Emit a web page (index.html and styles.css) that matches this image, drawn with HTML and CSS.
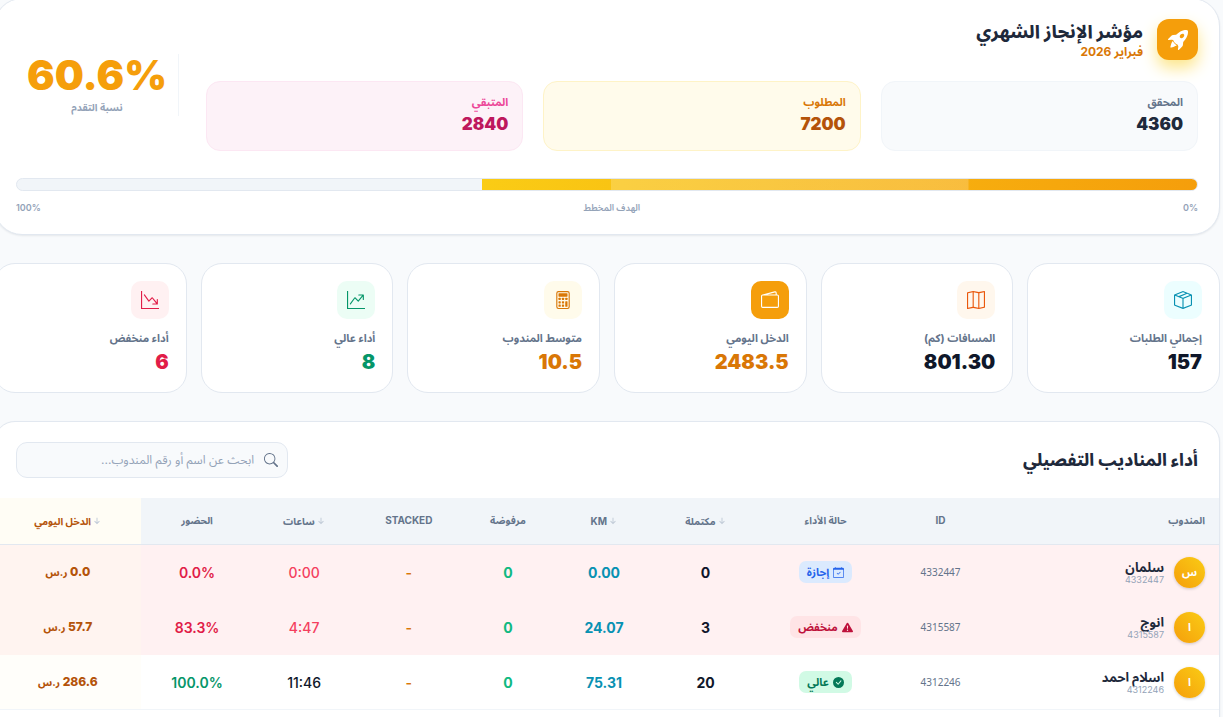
FILE: index.html
```html
<!DOCTYPE html>
<html lang="ar" dir="rtl">
<head>
    <meta charset="UTF-8">
    <meta name="viewport" content="width=device-width, initial-scale=1.0">
    <title>مؤشر الإنجاز الشهري</title>
    <link rel="stylesheet" href="styles.css">
</head>
<body>
    <svg class="sprite" aria-hidden="true">
        <symbol id="i-rocket" viewBox="0 0 16 16">
            <path d="M12.17 9.53c2.307-2.592 3.278-4.684 3.641-6.218.21-.887.214-1.58.16-2.065a3.6 3.6 0 0 0-.108-.563 2 2 0 0 0-.078-.23V.453c-.073-.164-.168-.234-.352-.295a2 2 0 0 0-.16-.045 4 4 0 0 0-.57-.093c-.49-.044-1.19-.03-2.08.188-1.536.374-3.618 1.343-6.161 3.604l-2.4.238h-.006a2.55 2.55 0 0 0-1.524.734L.15 7.17a.512.512 0 0 0 .433.868l1.896-.271c.28-.04.592.013.955.132.232.076.437.16.655.248l.203.083c.196.816.66 1.58 1.275 2.195.613.614 1.376 1.08 2.191 1.277l.082.202c.089.218.173.424.249.657.118.363.172.676.132.956l-.271 1.9a.512.512 0 0 0 .867.433l2.382-2.386c.41-.41.668-.949.732-1.526zm.11-3.699c-.797.8-1.93.961-2.528.362-.598-.6-.436-1.733.361-2.532.798-.799 1.93-.96 2.528-.361s.437 1.732-.36 2.531Z"/>
            <path d="M5.205 10.787a7.6 7.6 0 0 0 1.804 1.352c-1.118 1.007-4.929 2.028-5.054 1.903-.126-.127.737-4.189 1.839-5.18.346.69.837 1.35 1.411 1.925"/>
        </symbol>
        <symbol id="i-box" viewBox="0 0 16 16">
            <path d="M8.186 1.113a.5.5 0 0 0-.372 0L1.846 3.5l2.404.961L10.404 2zm3.564 1.426L5.596 5 8 5.961 14.154 3.5zm3.25 1.7-6.5 2.6v7.922l6.5-2.6V4.24zM7.5 14.762V6.838L1 4.239v7.923zM7.443.184a1.5 1.5 0 0 1 1.114 0l7.129 2.852A.5.5 0 0 1 16 3.5v8.662a1 1 0 0 1-.629.928l-7.185 2.874a.5.5 0 0 1-.372 0L.63 13.09a1 1 0 0 1-.63-.928V3.5a.5.5 0 0 1 .314-.464z"/>
        </symbol>
        <symbol id="i-map" viewBox="0 0 16 16">
            <path fill-rule="evenodd" d="M15.817.113A.5.5 0 0 1 16 .5v14a.5.5 0 0 1-.402.49l-5 1a.5.5 0 0 1-.196 0L5.5 15.01l-4.902.98A.5.5 0 0 1 0 15.5v-14a.5.5 0 0 1 .402-.49l5-1a.5.5 0 0 1 .196 0L10.5.99l4.902-.98a.5.5 0 0 1 .415.103M10 1.91l-4-.8v12.98l4 .8zm1 12.98 4-.8V1.11l-4 .8zm-6-.8V1.11l-4 .8v12.98z"/>
        </symbol>
        <symbol id="i-wallet" viewBox="0 0 16 16">
            <path d="M12.136.326A1.5 1.5 0 0 1 14 1.78V3h.5A1.5 1.5 0 0 1 16 4.5v9a1.5 1.5 0 0 1-1.5 1.5h-13A1.5 1.5 0 0 1 0 13.5v-9a1.5 1.5 0 0 1 1.432-1.499zM5.562 3H13V1.78a.5.5 0 0 0-.621-.484zM1.5 4a.5.5 0 0 0-.5.5v9a.5.5 0 0 0 .5.5h13a.5.5 0 0 0 .5-.5v-9a.5.5 0 0 0-.5-.5z"/>
        </symbol>
        <symbol id="i-calc" viewBox="0 0 16 16">
            <path d="M12 1a1 1 0 0 1 1 1v12a1 1 0 0 1-1 1H4a1 1 0 0 1-1-1V2a1 1 0 0 1 1-1zM4 0a2 2 0 0 0-2 2v12a2 2 0 0 0 2 2h8a2 2 0 0 0 2-2V2a2 2 0 0 0-2-2z"/>
            <rect x="4" y="2" width="8" height="3" rx=".5"/>
            <rect x="4" y="6" width="2" height="2" rx=".5"/>
            <rect x="7" y="6" width="2" height="2" rx=".5"/>
            <rect x="10" y="6" width="2" height="2" rx=".5"/>
            <rect x="4" y="9" width="2" height="2" rx=".5"/>
            <rect x="7" y="9" width="2" height="2" rx=".5"/>
            <rect x="4" y="12" width="2" height="2" rx=".5"/>
            <rect x="7" y="12" width="2" height="2" rx=".5"/>
            <rect x="10" y="9" width="2" height="5" rx=".5"/>
        </symbol>
        <symbol id="i-up" viewBox="0 0 16 16">
            <path fill-rule="evenodd" d="M0 0h1v15h15v1H0zm10 3.5a.5.5 0 0 1 .5-.5h4a.5.5 0 0 1 .5.5v4a.5.5 0 0 1-1 0V4.9l-3.613 4.417a.5.5 0 0 1-.74.037L7.06 6.767l-3.656 5.027a.5.5 0 0 1-.808-.588l4-5.5a.5.5 0 0 1 .758-.06l2.609 2.61L13.445 4H10.5a.5.5 0 0 1-.5-.5"/>
        </symbol>
        <symbol id="i-down" viewBox="0 0 16 16">
            <path fill-rule="evenodd" d="M0 0h1v15h15v1H0zm10 11.5a.5.5 0 0 0 .5.5h4a.5.5 0 0 0 .5-.5v-4a.5.5 0 0 0-1 0v2.6l-3.613-4.417a.5.5 0 0 0-.74-.037L7.06 8.233 3.404 3.206a.5.5 0 0 0-.808.588l4 5.5a.5.5 0 0 0 .758.06l2.609-2.61L13.445 11H10.5a.5.5 0 0 0-.5.5"/>
        </symbol>
        <symbol id="i-search" viewBox="0 0 16 16">
            <path d="M11.742 10.344a6.5 6.5 0 1 0-1.397 1.398h-.001q.044.06.098.115l3.85 3.85a1 1 0 0 0 1.415-1.414l-3.85-3.85a1 1 0 0 0-.115-.1zM12 6.5a5.5 5.5 0 1 1-11 0 5.5 5.5 0 0 1 11 0"/>
        </symbol>
        <symbol id="i-calendar" viewBox="0 0 16 16">
            <path d="M10.854 7.146a.5.5 0 0 1 0 .708l-3 3a.5.5 0 0 1-.708 0l-1.5-1.5a.5.5 0 1 1 .708-.708L7.5 9.793l2.646-2.647a.5.5 0 0 1 .708 0"/>
            <path d="M3.5 0a.5.5 0 0 1 .5.5V1h8V.5a.5.5 0 0 1 1 0V1h1a2 2 0 0 1 2 2v11a2 2 0 0 1-2 2H2a2 2 0 0 1-2-2V3a2 2 0 0 1 2-2h1V.5a.5.5 0 0 1 .5-.5M1 4v10a1 1 0 0 0 1 1h12a1 1 0 0 0 1-1V4z"/>
        </symbol>
        <symbol id="i-warning" viewBox="0 0 16 16">
            <path d="M8.982 1.566a1.13 1.13 0 0 0-1.96 0L.165 13.233c-.457.778.091 1.767.98 1.767h13.713c.889 0 1.438-.99.98-1.767zM8 5c.535 0 .954.462.9.995l-.35 3.507a.552.552 0 0 1-1.1 0L7.1 5.995A.905.905 0 0 1 8 5m.002 6a1 1 0 1 1 0 2 1 1 0 0 1 0-2"/>
        </symbol>
        <symbol id="i-check" viewBox="0 0 16 16">
            <path d="M16 8A8 8 0 1 1 0 8a8 8 0 0 1 16 0m-3.97-3.03a.75.75 0 0 0-1.08.022L7.477 9.417 5.384 7.323a.75.75 0 0 0-1.06 1.06L6.97 11.03a.75.75 0 0 0 1.079-.02l3.992-4.99a.75.75 0 0 0-.01-1.05z"/>
        </symbol>
        <symbol id="i-sort" viewBox="0 0 8 8">
            <path d="M3.500.8h1v4.500l1.600-1.600.7.7L4 7.200 1.200 4.400l.7-.7 1.600 1.600z"/>
        </symbol>
    </svg>

    <main class="dashboard">
        <!-- الإنجاز الشهري -->
        <section class="panel target">
            <div class="target-top">
                <div class="target-main">
                    <div class="target-head">
                        <span class="target-icon"><svg><use href="#i-rocket"/></svg></span>
                        <div>
                            <h1>مؤشر الإنجاز الشهري</h1>
                            <p class="month">فبراير 2026</p>
                        </div>
                    </div>
                    <div class="boxes">
                        <div class="box done">
                            <span class="box-label">المحقق</span>
                            <span class="box-value">4360</span>
                        </div>
                        <div class="box required">
                            <span class="box-label">المطلوب</span>
                            <span class="box-value">7200</span>
                        </div>
                        <div class="box remaining">
                            <span class="box-label">المتبقي</span>
                            <span class="box-value">2840</span>
                        </div>
                    </div>
                </div>
                <div class="percent">
                    <span class="percent-value" dir="ltr">60.6%</span>
                    <span class="percent-label">نسبة التقدم</span>
                </div>
            </div>
            <div class="progress">
                <div class="progress-fill" style="width: 60.6%"></div>
            </div>
            <div class="scale">
                <span dir="ltr">0%</span>
                <span>الهدف المخطط</span>
                <span dir="ltr">100%</span>
            </div>
        </section>

        <!-- بطاقات الملخص -->
        <section class="cards">
            <div class="card">
                <span class="card-icon cyan"><svg><use href="#i-box"/></svg></span>
                <span class="card-label">إجمالي الطلبات</span>
                <span class="card-value">157</span>
            </div>
            <div class="card">
                <span class="card-icon orange"><svg><use href="#i-map"/></svg></span>
                <span class="card-label">المسافات (كم)</span>
                <span class="card-value">801.30</span>
            </div>
            <div class="card">
                <span class="card-icon solid"><svg><use href="#i-wallet"/></svg></span>
                <span class="card-label">الدخل اليومي</span>
                <span class="card-value amber">2483.5</span>
            </div>
            <div class="card">
                <span class="card-icon yellow"><svg><use href="#i-calc"/></svg></span>
                <span class="card-label">متوسط المندوب</span>
                <span class="card-value amber">10.5</span>
            </div>
            <div class="card">
                <span class="card-icon green"><svg><use href="#i-up"/></svg></span>
                <span class="card-label">أداء عالي</span>
                <span class="card-value good">8</span>
            </div>
            <div class="card">
                <span class="card-icon red"><svg><use href="#i-down"/></svg></span>
                <span class="card-label">أداء منخفض</span>
                <span class="card-value bad">6</span>
            </div>
        </section>

        <!-- جدول المناديب -->
        <section class="panel details">
            <div class="details-head">
                <h2>أداء المناديب التفصيلي</h2>
                <label class="search">
                    <svg><use href="#i-search"/></svg>
                    <input type="text" placeholder="ابحث عن اسم أو رقم المندوب..." aria-label="ابحث عن اسم أو رقم المندوب">
                </label>
            </div>
            <table>
                <colgroup>
                    <col class="col-name">
                    <col class="col-id">
                    <col class="col-status">
                    <col class="col-done">
                    <col class="col-km">
                    <col class="col-rejected">
                    <col class="col-stacked">
                    <col class="col-hours">
                    <col class="col-attend">
                    <col class="col-income">
                </colgroup>
                <thead>
                    <tr>
                        <th class="name">المندوب</th>
                        <th>ID</th>
                        <th>حالة الأداء</th>
                        <th class="sort"><svg><use href="#i-sort"/></svg> مكتملة</th>
                        <th class="sort"><svg><use href="#i-sort"/></svg> KM</th>
                        <th>مرفوضة</th>
                        <th>STACKED</th>
                        <th class="sort"><svg><use href="#i-sort"/></svg> ساعات</th>
                        <th>الحضور</th>
                        <th class="sort income"><svg><use href="#i-sort"/></svg> الدخل اليومي</th>
                    </tr>
                </thead>
                <tbody>
                    <tr class="low">
                        <td class="name">
                            <div class="rider">
                                <span class="avatar">س</span>
                                <div>
                                    <div class="rider-name">سلمان</div>
                                    <div class="rider-id">4332447</div>
                                </div>
                            </div>
                        </td>
                        <td class="id">4332447</td>
                        <td><span class="badge leave"><svg><use href="#i-calendar"/></svg>إجازة</span></td>
                        <td class="done-count">0</td>
                        <td class="km">0.00</td>
                        <td class="rejected">0</td>
                        <td class="stacked">-</td>
                        <td class="hours short">0:00</td>
                        <td class="attend bad"><span dir="ltr">0.0%</span></td>
                        <td class="income">0.0 <small>ر.س</small></td>
                    </tr>
                    <tr class="low">
                        <td class="name">
                            <div class="rider">
                                <span class="avatar">ا</span>
                                <div>
                                    <div class="rider-name">انوج</div>
                                    <div class="rider-id">4315587</div>
                                </div>
                            </div>
                        </td>
                        <td class="id">4315587</td>
                        <td><span class="badge weak"><svg><use href="#i-warning"/></svg>منخفض</span></td>
                        <td class="done-count">3</td>
                        <td class="km">24.07</td>
                        <td class="rejected">0</td>
                        <td class="stacked">-</td>
                        <td class="hours short">4:47</td>
                        <td class="attend bad"><span dir="ltr">83.3%</span></td>
                        <td class="income">57.7 <small>ر.س</small></td>
                    </tr>
                    <tr>
                        <td class="name">
                            <div class="rider">
                                <span class="avatar">ا</span>
                                <div>
                                    <div class="rider-name">اسلام احمد</div>
                                    <div class="rider-id">4312246</div>
                                </div>
                            </div>
                        </td>
                        <td class="id">4312246</td>
                        <td><span class="badge high"><svg><use href="#i-check"/></svg>عالي</span></td>
                        <td class="done-count">20</td>
                        <td class="km">75.31</td>
                        <td class="rejected">0</td>
                        <td class="stacked">-</td>
                        <td class="hours">11:46</td>
                        <td class="attend good"><span dir="ltr">100.0%</span></td>
                        <td class="income">286.6 <small>ر.س</small></td>
                    </tr>
                </tbody>
            </table>
        </section>
    </main>
</body>
</html>
```
FILE: styles.css
```css
* {
    box-sizing: border-box;
}
body {
    margin: 0;
    font-family: Inter, "Noto Sans Arabic", "Noto Kufi Arabic", sans-serif;
    background: #f8fafc;
    color: #1e293b;
    overflow: hidden;
}
h1, h2, p {
    margin: 0;
}
svg {
    fill: currentColor;
    flex: none;
}
.sprite {
    display: none;
}
.dashboard {
    margin: -2px 3px 0 -6px;
    display: flex;
    flex-direction: column;
    gap: 28px;
}
.panel {
    background: #fff;
    border: 1px solid #e2e8f0;
    box-shadow: 0 1px 2px rgba(15, 23, 42, 0.08);
}

/* الإنجاز الشهري */
.target {
    border-radius: 28px;
    padding: 20px 21px 19px;
}
.target-top {
    display: flex;
    align-items: center;
    gap: 27px;
}
.target-main {
    flex: 1;
}
.target-head {
    display: flex;
    align-items: center;
    gap: 14px;
    margin-bottom: 21px;
}
.target-icon {
    display: flex;
    align-items: center;
    justify-content: center;
    width: 41px;
    height: 41px;
    border-radius: 12px;
    background: #f59e0b;
    color: #fff;
    box-shadow: 0 8px 16px #fde68a;
}
.target-icon svg {
    width: 20px;
    height: 20px;
}
h1 {
    font-size: 18px;
    line-height: 24px;
    font-weight: 800;
}
.month {
    font-size: 12px;
    line-height: 16px;
    font-weight: 700;
    color: #d97706;
}
.boxes {
    display: grid;
    grid-template-columns: repeat(3, 1fr);
    gap: 20px;
}
.box {
    display: flex;
    flex-direction: column;
    padding: 11px 14px;
    height: 70px;
    border: 1px solid;
    border-radius: 14px;
}
.box-label {
    font-size: 11px;
    line-height: 18px;
    font-weight: 700;
}
.box-value {
    font-size: 17px;
    line-height: 26px;
    font-weight: 900;
}
.done {
    background: #f8fafc;
    border-color: #f1f5f9;
    color: #1e293b;
}
.done .box-label {
    color: #64748b;
}
.required {
    background: #fffbeb;
    border-color: #fef3c7;
    color: #b45309;
}
.required .box-label {
    color: #d97706;
}
.remaining {
    background: #fdf2f8;
    border-color: #fce7f3;
    color: #be185d;
}
.remaining .box-label {
    color: #ec4899;
}
.percent {
    width: 163px;
    display: flex;
    flex-direction: column;
    align-items: center;
    border-right: 1px solid #f1f5f9;
}
.percent-value {
    font-size: 41px;
    line-height: 42px;
    font-weight: 900;
    color: #f59e0b;
}
.percent-label {
    margin-top: 2px;
    font-size: 10px;
    line-height: 18px;
    font-weight: 700;
    color: #94a3b8;
}
.progress {
    height: 13px;
    margin-top: 27px;
    border: 1px solid #e2e8f0;
    border-radius: 7px;
    background: #f1f5f9;
    overflow: hidden;
}
.progress-fill {
    height: 100%;
    background:
        linear-gradient(rgba(255, 255, 255, 0.2), rgba(255, 255, 255, 0.2)) 36% 0 / 50% 100% no-repeat,
        linear-gradient(to left, #f59e0b, #facc15);
}
.scale {
    display: flex;
    justify-content: space-between;
    margin-top: 9px;
    font-size: 9px;
    line-height: 15px;
    font-weight: 600;
    color: #94a3b8;
}

/* بطاقات الملخص */
.cards {
    display: grid;
    grid-template-columns: repeat(6, 1fr);
    gap: 14px;
}
.card {
    display: flex;
    flex-direction: column;
    height: 130px;
    padding: 17px 17px 0;
    background: #fff;
    border: 1px solid #e2e8f0;
    border-radius: 21px;
}
.card-icon {
    display: flex;
    align-items: center;
    justify-content: center;
    width: 38px;
    height: 38px;
    margin-bottom: 10px;
    border-radius: 10px;
}
.card-icon svg {
    width: 18px;
    height: 18px;
}
.cyan {
    background: #ecfeff;
    color: #0891b2;
}
.orange {
    background: #fff7ed;
    color: #ea580c;
}
.solid {
    background: #f59e0b;
    color: #fff;
}
.yellow {
    background: #fffbeb;
    color: #d97706;
}
.green {
    background: #ecfdf5;
    color: #059669;
}
.red {
    background: #fff1f2;
    color: #e11d48;
}
.card-label {
    font-size: 11px;
    line-height: 18px;
    font-weight: 700;
    color: #64748b;
}
.card-value {
    font-size: 20px;
    line-height: 30px;
    font-weight: 900;
    color: #0f172a;
}
.card-value.amber {
    color: #d97706;
}
.good, .card-value.good {
    color: #059669;
}
.bad, .card-value.bad {
    color: #e11d48;
}

/* جدول المناديب */
.details {
    border-radius: 21px 21px 0 0;
    overflow: hidden;
    min-height: 320px;
}
.details-head {
    display: flex;
    align-items: center;
    justify-content: space-between;
    padding: 20px 21px;
}
h2 {
    font-size: 17px;
    line-height: 26px;
    font-weight: 800;
}
.search {
    display: flex;
    align-items: center;
    gap: 10px;
    width: 272px;
    height: 36px;
    padding: 0 9px;
    border: 1px solid #e2e8f0;
    border-radius: 11px;
    background: #f8fafc;
    color: #94a3b8;
}
.search svg {
    width: 14px;
    height: 14px;
    color: #64748b;
}
.search input {
    flex: 1;
    min-width: 0;
    padding: 0;
    border: 0;
    outline: 0;
    background: none;
    font: 12px/18px Inter, "Noto Sans Arabic", "Noto Kufi Arabic", sans-serif;
    color: #1e293b;
}
.search input::placeholder {
    color: #94a3b8;
}
table {
    width: 100%;
    table-layout: fixed;
    border-collapse: separate;
    border-spacing: 0;
}
.col-name { width: 19%; }
.col-id { width: 7.5%; }
.col-status { width: 11.3%; }
.col-done { width: 8.3%; }
.col-km { width: 8.3%; }
.col-rejected { width: 7.4%; }
.col-stacked { width: 8.8%; }
.col-hours { width: 8.3%; }
.col-attend { width: 9.2%; }
.col-income { width: 11.9%; }
th {
    height: 47px;
    padding: 0 0 3px;
    background: #f1f5f9;
    border-bottom: 1px solid #e2e8f0;
    font-size: 10px;
    line-height: 16px;
    font-weight: 700;
    color: #64748b;
    white-space: nowrap;
}
th.sort {
    padding-bottom: 0;
}
th svg {
    width: 8px;
    height: 8px;
    color: #c3cdd9;
}
td {
    height: 55px;
    padding: 0;
    border-bottom: 1px solid #f1f5f9;
    text-align: center;
    font-size: 14px;
    font-weight: 600;
    white-space: nowrap;
}
.low td {
    background: #fff1f2;
    border-bottom-color: #fff1f2;
}
th.name, td.name {
    padding-right: 14px;
    text-align: right;
}
.rider {
    display: flex;
    align-items: center;
    gap: 10px;
}
.avatar {
    display: flex;
    align-items: center;
    justify-content: center;
    width: 31px;
    height: 31px;
    border-radius: 50%;
    background: linear-gradient(to bottom left, #facc15, #f59e0b);
    box-shadow: 0 1px 3px rgba(15, 23, 42, 0.2);
    color: #fff;
    font-size: 11px;
    font-weight: 700;
}
.rider-name {
    font-size: 13px;
    line-height: 16px;
    font-weight: 700;
}
.rider-id {
    font-size: 9px;
    line-height: 10px;
    font-weight: 400;
    color: #94a3b8;
}
td.id {
    font-family: "Noto Sans", sans-serif;
    font-size: 10px;
    font-weight: 400;
    color: #64748b;
}
.badge {
    display: inline-flex;
    align-items: center;
    gap: 4px;
    height: 22px;
    padding: 0 8px;
    border-radius: 7px;
    font-size: 11px;
    font-weight: 700;
}
.badge svg {
    width: 11px;
    height: 11px;
}
.leave {
    background: #dbeafe;
    color: #2563eb;
}
.weak {
    background: #ffe4e6;
    color: #be123c;
}
.high {
    background: #d1fae5;
    color: #047857;
}
.done-count {
    color: #0f172a;
}
.km {
    color: #0891b2;
}
.done-count, .km, .rejected {
    font-weight: 700;
}
.rejected {
    color: #10b981;
}
.stacked {
    color: #d97706;
}
.hours {
    font-weight: 500;
    color: #0f172a;
}
.short {
    color: #f43f5e;
}
th.income {
    background: #fffdf5;
    color: #b45309;
}
td.income {
    background: #fffefa;
    color: #b45309;
    font-size: 12px;
    font-weight: 800;
}
.low td.income {
    background: #fff4f0;
    border-bottom-color: #fff4f0;
}
td.income small {
    font-size: 10px;
}
```
